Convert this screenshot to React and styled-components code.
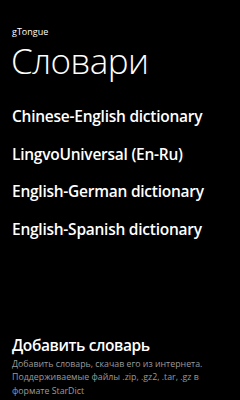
import React from 'react';
import styled, { createGlobalStyle } from 'styled-components';

const GlobalStyle = createGlobalStyle`
  html, body {
    margin: 0;
    padding: 0;
    background: #000;
  }
  body {
    font-family: "Open Sans", "Noto Sans", sans-serif;
    color: #fff;
  }
`;

const Page = styled.div`
  display: flex;
  flex-direction: column;
  width: 240px;
  height: 400px;
  box-sizing: border-box;
  padding: 0 12px;
  overflow: hidden;
`;

const AppName = styled.div`
  font-size: 9px;
  line-height: 12px;
  margin-top: 26px;
`;

const Title = styled.h1`
  margin: 3px 0 0 -1px;
  font-size: 35px;
  font-weight: 300;
  line-height: 40px;
  letter-spacing: -0.6px;
`;

const List = styled.div`
  display: flex;
  flex-direction: column;
  margin-top: 17px;
`;

const Item = styled.div`
  font-size: 15.5px;
  font-weight: 600;
  line-height: 37.5px;
  letter-spacing: -0.25px;
`;

const Footer = styled.div`
  margin-top: auto;
  padding-bottom: 2px;
`;

const FooterTitle = styled.div`
  font-size: 15.5px;
  font-weight: 600;
  line-height: 20px;
  letter-spacing: -0.4px;
`;

const FooterText = styled.div`
  margin-top: 3px;
  padding-right: 8px;
  font-size: 8.8px;
  line-height: 13.5px;
  color: #9a9a9a;
`;

const dictionaries = [
  'Chinese-English dictionary',
  'LingvoUniversal (En-Ru)',
  'English-German dictionary',
  'English-Spanish dictionary',
];

const App = () => (
  <>
    <GlobalStyle />
    <Page>
      <AppName>gTongue</AppName>
      <Title>Словари</Title>
      <List>
        {dictionaries.map((name) => (
          <Item key={name}>{name}</Item>
        ))}
      </List>
      <Footer>
        <FooterTitle>Добавить словарь</FooterTitle>
        <FooterText>
          Добавить словарь, скачав его из интернета. Поддерживаемые файлы .zip, .gz2, .tar, .gz в формате StarDict
        </FooterText>
      </Footer>
    </Page>
  </>
);

export default App;
